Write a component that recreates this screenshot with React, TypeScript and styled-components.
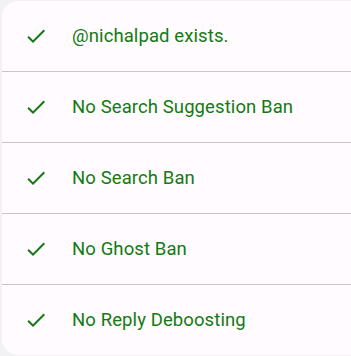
import React from "react";
import styled, { createGlobalStyle } from "styled-components";

const Global = createGlobalStyle`
  html, body { margin: 0; padding: 0; background: #f2f1f3; }
  body { font-family: Roboto, "Noto Sans", sans-serif; }
`;

const Page = styled.div`
  padding: 1px 0 0 2px;
  overflow: hidden;
`;

const Card = styled.div`
  width: 380px;
  background: #fffbfe;
  border-radius: 16px;
  overflow: hidden;
`;

const Row = styled.div`
  display: flex;
  align-items: center;
  gap: 24px;
  height: 70px;
  padding-left: 22px;
  & + & {
    border-top: 1px solid #c9c5ca;
  }
`;

const Label = styled.span`
  font-size: 18.5px;
  color: #137a13;
  letter-spacing: 0.1px;
`;

const Check = () => (
  <svg width="24" height="24" viewBox="0 0 24 24" aria-hidden="true">
    <path fill="#137a13" d="M9 16.17L4.83 12l-1.42 1.41L9 19 21 7l-1.41-1.41z" />
  </svg>
);

const items = [
  "@nichalpad exists.",
  "No Search Suggestion Ban",
  "No Search Ban",
  "No Ghost Ban",
  "No Reply Deboosting",
];

export default function App() {
  return (
    <>
      <Global />
      <Page>
        <Card>
          {items.map((t) => (
            <Row key={t}>
              <Check />
              <Label>{t}</Label>
            </Row>
          ))}
        </Card>
      </Page>
    </>
  );
}
